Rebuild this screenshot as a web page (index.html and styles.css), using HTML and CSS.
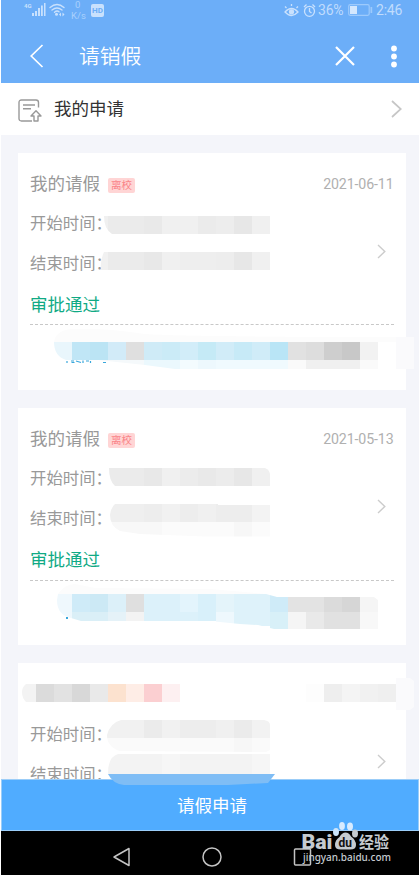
FILE: index.html
```html
<!DOCTYPE html>
<html lang="zh-CN">
<head>
<meta charset="utf-8">
<title>请销假</title>
<link rel="stylesheet" href="styles.css">
</head>
<body>
<div class="phone">
  <header class="top">
    <div class="status">
      <svg class="signals" width="69" height="20" viewBox="22 0 69 20">
        <g fill="#c9e1fd">
          <path d="M32 13h2v3h-2zM35 11h2v5h-2zM38 8h2v8h-2zM41 5.500h1.800v10.500h-1.800zM44 3h1.500v13h-1.500z"/>
          <circle cx="56.500" cy="14.300" r="1.500"/>
          <path d="M59 14.500l2-2v4zM64.500 14.500l-2-2v4z"/>
        </g>
        <g fill="none" stroke="#c9e1fd" stroke-width="1.400" stroke-linecap="round">
          <path d="M50 7.500q7-6 14 0M52 10q5-4 10 0M54.500 12.200q2.500-2 4.500-.4"/>
        </g>
        <text x="24" y="8" class="tiny">4G</text>
        <text x="75" y="8" class="rate">0</text>
        <text x="71" y="18.500" class="rate">K/s</text>
      </svg>
      <span class="hd">HD</span>
      <svg class="symbols" width="34" height="18" viewBox="282 0 34 18" fill="none" stroke="#c9e1fd" stroke-width="1.300">
        <path d="M284 11q6.500-7 13 0q-6.500 7-13 0zM285.500 7l-1.500-1.500M290.500 5V3M295.500 7l1.500-1.500"/>
        <circle cx="290.500" cy="10.800" r="2" fill="#c9e1fd"/>
        <circle cx="308.500" cy="10.300" r="5"/>
        <path d="M308.500 7v3.500l2 1.500M303 6l2.500-2.500M311.500 3.500L314 6"/>
      </svg>
      <span class="percent">36%</span>
      <svg class="battery" width="25" height="13" viewBox="0 0 25 13">
        <rect x=".7" y=".7" width="20.500" height="10.600" rx="1.500" fill="none" stroke="#9dcafc" stroke-width="1.200"/>
        <rect x="2" y="2" width="7" height="8" fill="#d3e7fe"/><rect x="22.500" y="3" width="1.700" height="6" fill="#9dcafc"/>
      </svg>
      <span class="clock">2:46</span>
    </div>
    <div class="titlebar">
      <svg class="back" width="14" height="24" viewBox="0 0 14 24"><path d="M12.500 1L1.200 12L12.500 23"/></svg>
      <h1>请销假</h1>
      <svg class="close" width="20" height="20" viewBox="0 0 20 20"><path d="M1 1L19 19M19 1L1 19"/></svg>
      <svg class="more" width="6" height="24" viewBox="0 0 6 24"><circle cx="3" cy="3.500" r="2.900"/><circle cx="3" cy="11.500" r="2.900"/><circle cx="3" cy="19.500" r="2.900"/></svg>
    </div>
  </header>

  <section class="mine">
    <svg class="form" width="24" height="24" viewBox="0 0 24 24" fill="none" stroke="#999" stroke-width="1.400">
      <path d="M14 22H3.500Q1 22 1 19.500V3.500Q1 1 3.500 1H18Q20.500 1 20.500 3.500V8.500M5 6h12M5 9.800h8"/>
      <path d="M18 11.800l-5 5.200h3v5h4v-5h3z" stroke-linejoin="round"/>
    </svg>
    <span>我的申请</span>
    <svg class="chevron" width="11" height="18" viewBox="0 0 11 18"><path d="M1 1L9.800 9L1 17"/></svg>
  </section>

  <main class="list">
    <article class="card">
      <div class="head"><h2>我的请假</h2><span class="tag">离校</span><time>2021-06-11</time></div>
      <div class="field">开始时间：</div>
      <div class="field">结束时间：</div>
      <div class="result">审批通过</div>
      <svg class="arrow" width="9" height="15" viewBox="0 0 9 15"><path d="M1 1L7.800 7.500L1 14"/></svg>
      <svg class="mask" viewBox="18 153 388 238">
        <defs>
          <clipPath id="a1"><path d="M104 216H270V234H112Q104 229 104 216z"/></clipPath>
          <clipPath id="a2"><path d="M104 252H270V270H101Q100 260 104 252z"/></clipPath>
          <clipPath id="a3"><path d="M54 342H378V369H175L145 365L98 360H66Q54 356 54 342z"/></clipPath>
        </defs>
        <path fill="#fcfcfc" d="M54 342Q56 330 72 329Q105 328 145 334Q190 337 396 337V342z"/>
        <g class="cells" clip-path="url(#a1)">
          <rect x="100" y="216" width="8" height="18" fill="#f0f0f0"/><rect x="108" y="216" width="36" height="18" fill="#ebebeb"/><rect x="144" y="216" width="18" height="18" fill="#e9e9e9"/><rect x="162" y="216" width="36" height="18" fill="#f0f0f0"/><rect x="198" y="216" width="18" height="18" fill="#ebebeb"/><rect x="216" y="216" width="18" height="18" fill="#ededed"/><rect x="234" y="216" width="18" height="18" fill="#e7e7e7"/><rect x="252" y="216" width="18" height="18" fill="#f0f0f0"/>
        </g>
        <g class="cells" clip-path="url(#a2)">
          <rect x="98" y="252" width="10" height="18" fill="#f1f1f1"/><rect x="108" y="252" width="36" height="18" fill="#ebebeb"/><rect x="144" y="252" width="18" height="18" fill="#e8e8e8"/><rect x="162" y="252" width="18" height="18" fill="#f0f0f0"/><rect x="180" y="252" width="36" height="18" fill="#eee"/><rect x="216" y="252" width="18" height="18" fill="#ededed"/><rect x="234" y="252" width="18" height="18" fill="#e7e7e7"/><rect x="252" y="252" width="18" height="18" fill="#f0f0f0"/>
        </g>
        <g class="cells" clip-path="url(#a3)">
          <rect x="54" y="342" width="18" height="18" fill="#e9f6fc"/><rect x="72" y="342" width="18" height="18" fill="#c0e6f6"/><rect x="90" y="342" width="18" height="18" fill="#bbe4f4"/><rect x="108" y="342" width="18" height="18" fill="#d2ebf8"/><rect x="126" y="342" width="18" height="18" fill="#dfdfdf"/><rect x="144" y="342" width="18" height="18" fill="#cfebf7"/><rect x="162" y="342" width="18" height="18" fill="#cbebf7"/><rect x="180" y="342" width="18" height="18" fill="#d2edf9"/><rect x="198" y="342" width="18" height="18" fill="#c5eaf6"/><rect x="216" y="342" width="18" height="18" fill="#d1ecf8"/><rect x="234" y="342" width="18" height="18" fill="#c7eaf7"/><rect x="252" y="342" width="18" height="18" fill="#d0ecf8"/><rect x="270" y="342" width="18" height="18" fill="#b9e5f6"/><rect x="288" y="342" width="18" height="18" fill="#e1e1e1"/><rect x="306" y="342" width="18" height="18" fill="#ddd"/><rect x="324" y="342" width="18" height="18" fill="#cecece"/><rect x="342" y="342" width="18" height="18" fill="#c8c8c8"/><rect x="360" y="342" width="18" height="18" fill="#f2f2f2"/>
          <rect x="90" y="360" width="54" height="9" fill="#f5f9fb"/><rect x="144" y="360" width="36" height="9" fill="#ebf8fd"/><rect x="180" y="360" width="18" height="9" fill="#f3fbfe"/><rect x="198" y="360" width="18" height="9" fill="#edf8fd"/><rect x="216" y="360" width="72" height="9" fill="#f0fafe"/><rect x="288" y="360" width="18" height="9" fill="#fafafa"/><rect x="306" y="360" width="54" height="9" fill="#f0f0f0"/><rect x="360" y="360" width="18" height="9" fill="#fafafa"/>
        </g>
        <path d="M67 361v2M71 361h3M71.500 362.500h3M76 361l5 1.500M83 360.500v2.500M86 361h3M90.500 361v2M103 362.500h3" stroke="#39a7dc" stroke-width="1.200" fill="none"/>
        <path d="M396 337h18v32h-18z" fill="#fafafc"/>
      </svg>
    </article>

    <article class="card">
      <div class="head"><h2>我的请假</h2><span class="tag">离校</span><time>2021-05-13</time></div>
      <div class="field">开始时间：</div>
      <div class="field">结束时间：</div>
      <div class="result">审批通过</div>
      <svg class="arrow" width="9" height="15" viewBox="0 0 9 15"><path d="M1 1L7.800 7.500L1 14"/></svg>
      <svg class="mask" viewBox="18 408 388 238">
        <defs>
          <clipPath id="b1"><path d="M109 468H265Q270 470 270 475V486H115Q109 481 109 468z"/></clipPath>
          <clipPath id="b2"><path d="M115 504H218V505H270V536.500H205L140 534L120 531Q110 526 110 515Q111 507 115 504z"/></clipPath>
          <clipPath id="b3"><path d="M58 594H266L277 597H374L378 600V629H274L258 625L240 624L210 621H81L71 618Q57 615 57 600z"/></clipPath>
        </defs>
        <path fill="#fcfcfc" d="M58 594Q65 584 75 584L95 588L210 589L266 594z"/>
        <g class="cells" clip-path="url(#b1)">
          <rect x="108" y="468" width="36" height="18" fill="#ebebeb"/><rect x="144" y="468" width="18" height="18" fill="#e8e8e8"/><rect x="162" y="468" width="18" height="18" fill="#f0f0f0"/><rect x="180" y="468" width="18" height="18" fill="#ececec"/><rect x="198" y="468" width="18" height="18" fill="#e9e9e9"/><rect x="216" y="468" width="18" height="18" fill="#ececec"/><rect x="234" y="468" width="18" height="18" fill="#e7e7e7"/><rect x="252" y="468" width="18" height="18" fill="#f0f0f0"/>
        </g>
        <g class="cells" clip-path="url(#b2)">
          <rect x="108" y="504" width="36" height="18" fill="#efefef"/><rect x="144" y="504" width="18" height="18" fill="#ededed"/><rect x="162" y="504" width="18" height="18" fill="#f1f1f1"/><rect x="180" y="504" width="18" height="18" fill="#ededed"/><rect x="198" y="504" width="18" height="18" fill="#f0f0f0"/><rect x="216" y="504" width="36" height="18" fill="#ededed"/><rect x="252" y="504" width="18" height="18" fill="#f3f3f3"/><rect x="108" y="522" width="54" height="15" fill="#f8f8f8"/><rect x="162" y="522" width="72" height="15" fill="#fbfbfb"/><rect x="234" y="522" width="18" height="15" fill="#f7f7f7"/><rect x="252" y="522" width="18" height="15" fill="#fbfbfb"/>
        </g>
        <g class="cells" clip-path="url(#b3)">
          <rect x="54" y="594" width="18" height="27" fill="#eff8fd"/><rect x="72" y="594" width="18" height="18" fill="#cfebf8"/><rect x="90" y="594" width="18" height="18" fill="#cce9f5"/><rect x="108" y="594" width="18" height="18" fill="#dcf0f9"/><rect x="126" y="594" width="18" height="18" fill="#dfdfdf"/><rect x="144" y="594" width="36" height="27" fill="#dcf1fa"/><rect x="180" y="594" width="18" height="18" fill="#e3f4fc"/><rect x="198" y="594" width="18" height="27" fill="#d8f0fa"/><rect x="216" y="594" width="18" height="18" fill="#e4f4fa"/><rect x="234" y="594" width="36" height="32" fill="#def2fa"/><rect x="270" y="594" width="18" height="18" fill="#cfebf8"/><rect x="288" y="594" width="36" height="18" fill="#e3e3e3"/><rect x="324" y="594" width="18" height="18" fill="#dbdbdb"/><rect x="342" y="594" width="18" height="18" fill="#d6d6d6"/><rect x="360" y="594" width="18" height="18" fill="#f5f5f5"/>
          <rect x="72" y="612" width="36" height="9" fill="#daeff7"/><rect x="108" y="612" width="18" height="9" fill="#e5f2f8"/><rect x="126" y="612" width="18" height="9" fill="#f3f3f3"/><rect x="180" y="612" width="18" height="9" fill="#dcf1fa"/><rect x="216" y="612" width="18" height="12" fill="#eef8fd"/><rect x="270" y="612" width="18" height="18" fill="#d8f0f8"/><rect x="288" y="612" width="18" height="18" fill="#f5f5f5"/><rect x="306" y="612" width="18" height="18" fill="#e9e9e9"/><rect x="324" y="612" width="36" height="18" fill="#e1e1e1"/><rect x="360" y="612" width="18" height="18" fill="#f8f8f8"/>
        </g>
        <rect x="66" y="617" width="2" height="2" fill="#39a7dc"/>
      </svg>
    </article>

    <article class="card">
      <div class="head"></div>
      <div class="field">开始时间：</div>
      <div class="field">结束时间：</div>
      <svg class="arrow" width="9" height="15" viewBox="0 0 9 15"><path d="M1 1L7.800 7.500L1 14"/></svg>
      <svg class="mask" viewBox="18 663 388 238">
        <defs>
          <clipPath id="c1"><path d="M26 684H180V702H26Q22 698 22 692Q22 687 26 684z"/></clipPath>
          <clipPath id="c2"><path d="M121 720H264Q270 721 270 725V750L266 752L120 751Q107 747 107 735Q110 723 121 720z"/></clipPath>
          <clipPath id="c3"><path d="M118 754H270V775H275L268 783L228 785H124Q113 784 108 773Q108 757 118 754z"/></clipPath>
        </defs>
        <g class="cells" clip-path="url(#c1)">
          <rect x="18" y="684" width="18" height="18" fill="#f3f3f3"/><rect x="36" y="684" width="18" height="18" fill="#dbdbdb"/><rect x="54" y="684" width="18" height="18" fill="#e2e2e2"/><rect x="72" y="684" width="18" height="18" fill="#d8d8d8"/><rect x="90" y="684" width="18" height="18" fill="#e9e9e9"/><rect x="108" y="684" width="18" height="18" fill="#fce2cf"/><rect x="126" y="684" width="18" height="18" fill="#feede6"/><rect x="144" y="684" width="18" height="18" fill="#fbcfd1"/><rect x="162" y="684" width="18" height="18" fill="#fdf0f1"/>
        </g>
        <g class="cells">
          <rect x="306" y="684" width="18" height="18" fill="#fdfdfd"/><rect x="324" y="684" width="18" height="18" fill="#eee"/><rect x="342" y="684" width="18" height="18" fill="#f4f4f4"/><rect x="360" y="684" width="18" height="18" fill="#f1f1f1"/><rect x="378" y="684" width="18" height="18" fill="#efefef"/>
        </g>
        <path d="M396 678h14l4 3v26l-4 3h-14z" fill="#fafafc"/>
        <g class="cells" clip-path="url(#c2)">
          <rect x="106" y="720" width="38" height="18" fill="#f1f1f1"/><rect x="144" y="720" width="18" height="18" fill="#ebebeb"/><rect x="162" y="720" width="18" height="18" fill="#f1f1f1"/><rect x="180" y="720" width="36" height="18" fill="#ededed"/><rect x="216" y="720" width="18" height="18" fill="#f0f0f0"/><rect x="234" y="720" width="18" height="18" fill="#ebebeb"/><rect x="252" y="720" width="18" height="18" fill="#f2f2f2"/><rect x="106" y="738" width="128" height="15" fill="#fafafa"/><rect x="234" y="738" width="18" height="15" fill="#f7f7f7"/><rect x="252" y="738" width="18" height="15" fill="#fafafa"/>
        </g>
        <g class="cells" clip-path="url(#c3)">
          <rect x="106" y="754" width="56" height="20" fill="#f3f3f3"/><rect x="162" y="754" width="18" height="20" fill="#f6f6f6"/><rect x="180" y="754" width="72" height="20" fill="#f3f3f3"/><rect x="252" y="754" width="18" height="20" fill="#f6f6f6"/>
        </g>
      </svg>
    </article>
  </main>

  <footer>
    <div class="apply">请假申请</div>
    <svg class="smudge" width="168" height="12" viewBox="108 774 168 12"><path d="M108 774H275L268 783L228 785H124Q113 784 108 774z" fill="#7fbdf5"/></svg>
    <nav>
      <svg width="20" height="22" viewBox="0 0 20 22"><path d="M18 2.500V19.500L3 11z"/></svg>
      <svg width="22" height="22" viewBox="0 0 22 22"><circle cx="11" cy="11" r="9"/></svg>
      <svg width="20" height="20" viewBox="0 0 20 20"><rect x="1.500" y="2" width="16" height="16" rx="1"/></svg>
    </nav>
    <svg class="watermark" width="96" height="48" viewBox="298 818 96 48">
      <g fill="#c5cbd0">
        <text x="301.500" y="849" class="brand" textLength="31" lengthAdjust="spacingAndGlyphs">Bai</text>
        <ellipse cx="336" cy="832" rx="3" ry="4" fill="#cde5fa"/><ellipse cx="342" cy="826" rx="2.900" ry="4" fill="#d7ebff"/><ellipse cx="350" cy="826.500" rx="3" ry="4" fill="#d7ebff"/><ellipse cx="355" cy="833.500" rx="3" ry="4"/>
        <path d="M345.500 832.500Q349 832.500 351 836.500Q356 840 356 845Q356 850 349 849.500H342Q335 850 335 845Q335 840 339.500 837Q342 832.500 345.500 832.500z"/>
        <text x="338.500" y="847" class="du">du</text>
        <text x="359" y="848" class="jy" textLength="30" lengthAdjust="spacingAndGlyphs">经验</text>
        <text x="303" y="861" class="site" textLength="88" lengthAdjust="spacingAndGlyphs">jingyan.baidu.com</text>
      </g>
    </svg>
  </footer>
</div>
</body>
</html>
```
FILE: styles.css
```css
* { box-sizing: border-box; }
body { margin: 0; background: #fff; font-family: Roboto, "Noto Sans CJK SC", sans-serif; }
h1, h2 { margin: 0; font-weight: 400; }
svg { display: block; flex: none; }
.phone { height: 875px; padding-left: 1px; display: flex; flex-direction: column; overflow: hidden; background: #fff; }

.top { height: 83px; flex: none; background: #6caef8; color: #c9e1fd; }
.status { height: 20px; display: flex; align-items: center; padding-left: 21px; }
.signals { overflow: hidden; }
.tiny { font-size: 6px; font-weight: 700; fill: #c9e1fd; }
.rate { font-size: 9.500px; fill: #a9d0fc; }
.hd { width: 13px; height: 13px; border-radius: 2px; background: #c9e1fd; color: #6caef8; font-size: 8px; font-weight: 700; line-height: 13px; text-align: center; }
.symbols { margin-left: 179px; }
.percent { margin-left: 1px; width: 30px; font-size: 14px; }
.battery { margin: 1px 3px 0 0; }
.clock { font-size: 14px; }
.percent, .clock { line-height: 20px; color: #c0dcfd; white-space: nowrap; letter-spacing: -.2px; }
.titlebar { height: 63px; display: flex; align-items: center; padding: 9px 22px 0 29px; color: #fff; }
.titlebar svg { fill: none; stroke: #fff; stroke-width: 1.700; }
.titlebar h1 { margin: 2px 0 0 35px; font-size: 20.800px; line-height: 30px; font-weight: 350; flex: 1; }
.titlebar .close { stroke-width: 2.200; margin-right: 36px; }
.titlebar .more { fill: #fff; stroke: none; margin-top: 1px; }

.mine { height: 52px; flex: none; display: flex; align-items: center; padding: 0 16px 0 17px; background: #fff; color: #333; font-size: 17.500px; }
.mine span { margin-left: 12px; flex: 1; line-height: 26px; }
.form { margin-top: 3px; }
.chevron, .arrow { fill: none; stroke: #c6c6c6; stroke-width: 1.700; }
.chevron { margin-right: 1px; }

.list { flex: 1; min-height: 0; padding: 17.600px 13.500px 0 17px; display: flex; flex-direction: column; gap: 18px; overflow: hidden; background: #f4f5fa; }
.card { position: relative; flex: none; height: 237.300px; padding: 11.400px 12px 0; background: #fff; color: #999; }
.head { height: 40px; display: flex; align-items: center; }
.head h2 { font-size: 17.500px; line-height: 26px; }
.tag { margin: 3px 0 0 8px; width: 27px; height: 15px; border-radius: 2px; background: #ffd5d5; color: #fa8488; font-size: 10.500px; line-height: 15px; text-align: center; }
.head time { margin-left: auto; font-size: 14.200px; letter-spacing: -.13px; color: #b0b0b0; }
.field { height: 40px; font-size: 16.400px; line-height: 40px; white-space: nowrap; }
.result { height: 41.500px; border-bottom: 1px dashed #c8c8c8; color: #10aa85; font-size: 17.500px; line-height: 42px; }
.arrow { position: absolute; right: 20px; top: 91px; stroke: #ccc; stroke-width: 1.400; }
.mask { position: absolute; left: 0; top: 0; width: 388px; height: 238px; overflow: visible; }
.cells { shape-rendering: crispEdges; }

footer { position: relative; flex: none; height: 96px; }
.apply { height: 52px; border: 1px solid #9bcdf8; background: #50acff; color: #fff; font-size: 17.500px; line-height: 52px; text-align: center; padding-left: 4px; }
.smudge { position: absolute; left: 107px; top: -5px; }
nav { height: 44px; background: #000; display: flex; align-items: center; justify-content: center; gap: 70px; padding: 7px 0 0 4px; }
nav svg { fill: none; stroke: #c4c4c4; stroke-width: 1.500; stroke-linejoin: round; }
.watermark { position: absolute; left: 297px; top: 39px; }
.brand { font: 900 20px Roboto, sans-serif; }
.du { font: 700 12px Roboto, sans-serif; fill: #111; }
.jy { font: 700 15.500px "Noto Sans CJK SC", sans-serif; }
.site { font: 500 11px "Noto Sans", sans-serif; }
```
